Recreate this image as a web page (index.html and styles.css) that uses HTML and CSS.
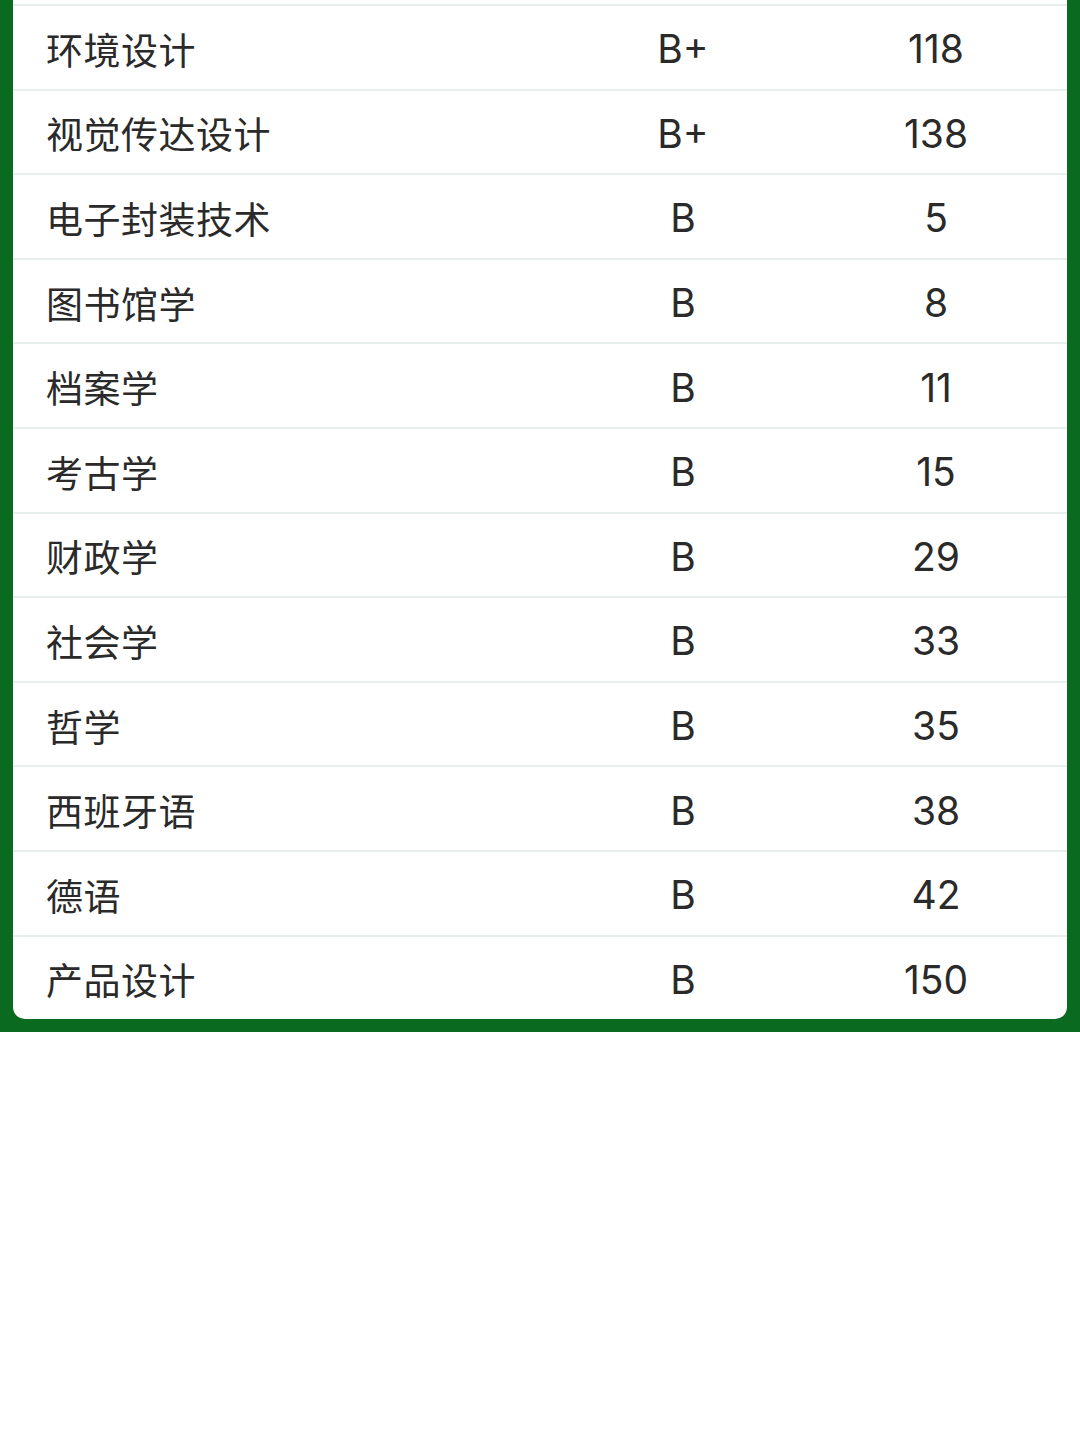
FILE: index.html
```html
<!DOCTYPE html>
<html lang="zh-CN">
<head>
<meta charset="utf-8">
<link rel="stylesheet" href="styles.css">
</head>
<body>
<div class="frame">
  <div class="card">
    <div class="row"><span class="name">环境设计</span><span class="grade">B+</span><span class="num">118</span></div>
    <div class="row"><span class="name">视觉传达设计</span><span class="grade">B+</span><span class="num">138</span></div>
    <div class="row"><span class="name">电子封装技术</span><span class="grade">B</span><span class="num">5</span></div>
    <div class="row"><span class="name">图书馆学</span><span class="grade">B</span><span class="num">8</span></div>
    <div class="row"><span class="name">档案学</span><span class="grade">B</span><span class="num">11</span></div>
    <div class="row"><span class="name">考古学</span><span class="grade">B</span><span class="num">15</span></div>
    <div class="row"><span class="name">财政学</span><span class="grade">B</span><span class="num">29</span></div>
    <div class="row"><span class="name">社会学</span><span class="grade">B</span><span class="num">33</span></div>
    <div class="row"><span class="name">哲学</span><span class="grade">B</span><span class="num">35</span></div>
    <div class="row"><span class="name">西班牙语</span><span class="grade">B</span><span class="num">38</span></div>
    <div class="row"><span class="name">德语</span><span class="grade">B</span><span class="num">42</span></div>
    <div class="row"><span class="name">产品设计</span><span class="grade">B</span><span class="num">150</span></div>
  </div>
</div>
</body>
</html>
```
FILE: styles.css
```css
html, body {
  margin: 0;
  padding: 0;
  background: #ffffff;
}
body {
  font-family: Inter, "Noto Sans CJK SC", sans-serif;
  color: #2a2a2a;
}
.frame {
  background: #0a6a1f;
  padding: 0 13px 13px 13px;
}
.card {
  background: #ffffff;
  border-radius: 0 0 12px 12px;
  padding-top: 4px;
}
.row {
  box-sizing: border-box;
  height: 84.6px;
  padding-top: 3px;
  border-top: 2px solid #e8eeec;
  display: grid;
  grid-template-columns: 540px 260px 244px;
  align-items: center;
}
.name {
  padding-left: 33px;
  font-family: "Noto Sans CJK SC", sans-serif;
  font-size: 37px;
  letter-spacing: 0.5px;
}
.grade, .num {
  text-align: center;
  font-size: 39px;
  font-weight: 400;
}
.num {
  padding-left: 2px;
}
```
